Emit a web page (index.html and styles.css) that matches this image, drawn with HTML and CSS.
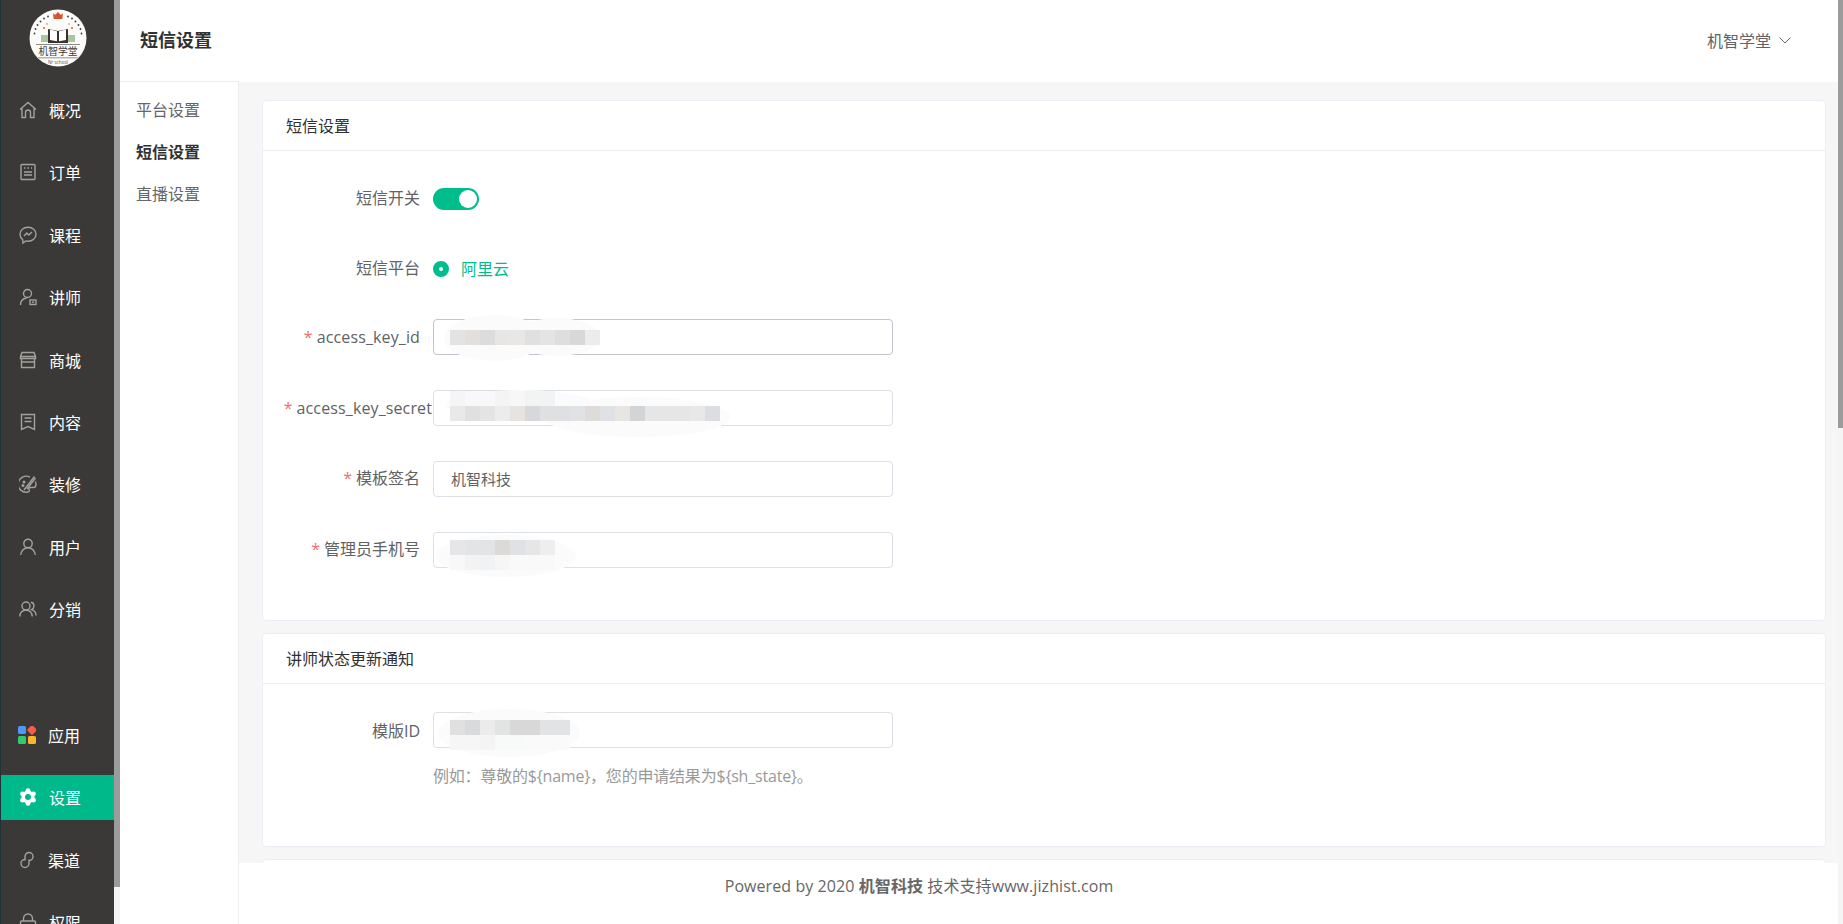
FILE: index.html
```html
<!DOCTYPE html>
<html lang="zh-CN">
<head>
<meta charset="utf-8">
<title>短信设置</title>
<link rel="stylesheet" href="styles.css">
</head>
<body>
<div class="app">
  <aside class="sidebar">
    <div class="side-inner">
      <div class="logo">
        <svg width="58" height="58" viewBox="0 0 58 58">
          <circle cx="29" cy="29" r="28.500" fill="#fbfbf9"/>
          <path d="M24 4l2 2 3-3 3 3 2-2 -.7 6h-8.600z" fill="#d8542f"/>
          <g fill="#3d3a36">
            <circle cx="19" cy="7.500" r=".9"/><circle cx="15" cy="9.500" r=".9"/><circle cx="11.500" cy="12.500" r=".9"/><circle cx="8.500" cy="16" r=".9"/><circle cx="6.500" cy="20" r=".9"/><circle cx="5.500" cy="24.500" r=".9"/>
            <circle cx="39" cy="7.500" r=".9"/><circle cx="43" cy="9.500" r=".9"/><circle cx="46.500" cy="12.500" r=".9"/><circle cx="49.500" cy="16" r=".9"/><circle cx="51.500" cy="20" r=".9"/><circle cx="52.500" cy="24.500" r=".9"/>
          </g>
          <g fill="#e0694a"><circle cx="15" cy="19" r="1.100"/><circle cx="43" cy="19" r="1.100"/><circle cx="18" cy="15" r=".8"/><circle cx="40" cy="15" r=".8"/></g>
          <rect x="12" y="26" width="7" height="7" fill="#a9c6a3"/><rect x="39" y="26" width="7" height="7" fill="#a9c6a3"/>
          <path d="M19 20l10 2 10-2v14H19z" fill="#38332e"/>
          <path d="M21 20.500l7 1.800v10l-7-1.300zM37 20.500l-7 1.800v10l7-1.300z" fill="#fff"/>
          <rect x="7" y="35" width="44" height="1" fill="#8a8a86"/>
          <text x="29" y="46" class="logo-name" text-anchor="middle">机智学堂</text>
          <rect x="9" y="48" width="40" height="1.500" fill="#b5b5b0"/>
          <text x="29" y="54.500" class="logo-sub" text-anchor="middle">Nr school</text>
        </svg>
      </div>
      <nav class="nav">
        <a class="nav-item"><svg class="ico" viewBox="0 0 18 18"><path d="M1 8.500 9 1.500l8 7M3 7v9.500h3.500V11.500a2.500 2.500 0 0 1 5 0v5H15V7"/></svg><span>概况</span></a>
        <a class="nav-item"><svg class="ico" viewBox="0 0 18 18"><rect x="2" y="1.500" width="14" height="15" rx="1"/><path d="M5 5h1.500M8.500 5H10M12 5h1M5 9h8M5 12h8"/></svg><span>订单</span></a>
        <a class="nav-item"><svg class="ico" viewBox="0 0 18 18"><path d="M9 1.200c4.500 0 8 3 8 7s-3.500 7-8 7c-.8 0-1.500-.1-2.200-.3L4 17l-.3-3.500C2 12.200 1 10.300 1 8.200c0-4 3.500-7 8-7z"/><path d="M5 10l2.800-3 2 2L13 6"/></svg><span>课程</span></a>
        <a class="nav-item"><svg class="ico" viewBox="0 0 18 18"><circle cx="8.500" cy="5.500" r="4"/><path d="M1.500 17c0-4 2.500-6.500 6-7"/><rect x="11" y="12" width="6" height="4.500"/><path d="M13 14.200h2"/></svg><span>讲师</span></a>
        <a class="nav-item"><svg class="ico" viewBox="0 0 18 18"><path d="M3 1.500h12l1.500 4v2h-15v-2zM1.500 5.500h15M2.500 7.500v9h13v-9M2 11h14"/></svg><span>商城</span></a>
        <a class="nav-item"><svg class="ico" viewBox="0 0 18 18"><path d="M2.500 1.500h13v15l-6.500-3-6.500 3zM5.500 5h7M5.500 8.500h7"/></svg><span>内容</span></a>
        <a class="nav-item"><svg class="ico" viewBox="0 0 18 18"><path d="M11 2.200A8 8 0 1 0 9 17c1.500 0 1.500-1.500 1-2.500s0-2 1.500-2h3c1.500 0 2.500-1 2.500-3 0-1-.2-2-.6-3"/><path d="M5 15 15.500 1.500M8 14 16.500 3"/><circle cx="5" cy="7" r=".8"/><circle cx="4" cy="10.500" r=".8"/></svg><span>装修</span></a>
        <a class="nav-item"><svg class="ico" viewBox="0 0 18 18"><circle cx="9" cy="5.500" r="4.200"/><path d="M1.800 17c0-4 3-7.200 7.200-7.200s7.200 3.200 7.200 7.200"/></svg><span>用户</span></a>
        <a class="nav-item"><svg class="ico" viewBox="0 0 18 18"><circle cx="7" cy="6" r="4"/><path d="M.8 16.500c0-3.800 2.700-6.500 6.200-6.500s6.200 2.700 6.200 6.500M12 2.300c2 .3 3 2 3 3.700s-1 3-2.500 3.700c2.500.7 4.500 3 4.500 5.800"/></svg><span>分销</span></a>
      </nav>
      <nav class="nav nav-lower">
        <a class="nav-item nav-item-tight"><svg class="ico-apps" viewBox="0 0 18 18"><rect x="0" y="0" width="8" height="8" rx="1.500" fill="#4f97f3"/><rect x="10.300" y=".3" width="7.400" height="7.400" rx="1.500" fill="#f75c4c" transform="rotate(45 14 4)"/><rect x="0" y="10" width="8" height="8" rx="1.500" fill="#35c96e"/><rect x="10" y="10" width="8" height="8" rx="1.500" fill="#f9b62a"/></svg><span>应用</span></a>
        <a class="nav-item nav-item-active"><svg class="ico-fill" viewBox="0 0 18 18"><circle cx="9" cy="9" r="6.500"/><circle cx="9" cy="2.600" r="2.400"/><circle cx="9" cy="15.400" r="2.400"/><circle cx="3.500" cy="5.800" r="2.400"/><circle cx="14.500" cy="5.800" r="2.400"/><circle cx="3.500" cy="12.200" r="2.400"/><circle cx="14.500" cy="12.200" r="2.400"/><circle class="gear-hole" cx="9" cy="9" r="3"/></svg><span>设置</span></a>
        <a class="nav-item nav-item-tight"><svg class="ico" viewBox="0 0 18 18"><path d="M7 9.500V5.500a4 4 0 0 1 8 0c0 2.500-2 4-4 4M11 8.500v4a4 4 0 0 1-8 0c0-2.500 2-4 4-4"/></svg><span>渠道</span></a>
        <a class="nav-item"><svg class="ico" viewBox="0 0 18 18"><rect x="1.500" y="8" width="15" height="9" rx="1"/><path d="M4.500 8V5.500a4.500 4.500 0 0 1 9 0V8M9 11v3"/></svg><span>权限</span></a>
      </nav>
    </div>
    <div class="side-scroll"><div class="side-thumb"></div></div>
  </aside>

  <div class="main">
    <header class="topbar">
      <h1 class="page-title">短信设置</h1>
      <div class="account">
        <span>机智学堂</span>
        <svg class="chev" viewBox="0 0 12 7"><path d="M.5.500 6 6l5.500-5.500"/></svg>
      </div>
    </header>
    <div class="body">
      <div class="submenu">
        <a class="sub-item">平台设置</a>
        <a class="sub-item sub-active">短信设置</a>
        <a class="sub-item">直播设置</a>
      </div>
      <div class="pane">
        <div class="content">
          <section class="card">
            <div class="card-head">短信设置</div>
            <div class="card-body card-body-a">
              <div class="row row-switch">
                <label class="lbl lbl-cjk">短信开关</label>
                <span class="switch"><i class="knob"></i></span>
              </div>
              <div class="row row-radio">
                <label class="lbl lbl-cjk">短信平台</label>
                <span class="radio"></span><span class="radio-text">阿里云</span>
              </div>
              <div class="row">
                <label class="lbl lbl-latin"><em class="req">*</em>access_key_id</label>
                <div class="input input-hover">
                  <span class="blob blob-1a"></span><span class="blob blob-1b"></span>
                  <span class="mosaic m1"></span>
                </div>
              </div>
              <div class="row">
                <label class="lbl lbl-latin lbl-long"><em class="req">*</em>access_key_secret</label>
                <div class="input">
                  <span class="blob blob-2a"></span><span class="blob blob-2b"></span>
                  <span class="mosaic m2top"></span><span class="mosaic m2"></span>
                </div>
              </div>
              <div class="row">
                <label class="lbl lbl-cjk"><em class="req">*</em>模板签名</label>
                <div class="input"><span class="input-val">机智科技</span></div>
              </div>
              <div class="row">
                <label class="lbl lbl-cjk"><em class="req">*</em>管理员手机号</label>
                <div class="input">
                  <span class="blob blob-3"></span>
                  <span class="mosaic m3"></span><span class="mosaic m3low"></span>
                </div>
              </div>
            </div>
          </section>
          <section class="card">
            <div class="card-head">讲师状态更新通知</div>
            <div class="card-body card-body-b">
              <div class="row row-tight">
                <label class="lbl">模版ID</label>
                <div class="input">
                  <span class="blob blob-4"></span>
                  <span class="mosaic m4"></span><span class="mosaic m4low"></span>
                </div>
              </div>
              <p class="hint">例如：尊敬的${name}，您的申请结果为${sh_state}。</p>
            </div>
          </section>
          <section class="card">
            <div class="card-head"></div>
          </section>
        </div>
        <footer class="footer">Powered by 2020 <b>机智科技</b> 技术支持www.jizhist.com</footer>
      </div>
    </div>
  </div>
  <div class="page-scroll"><div class="page-thumb"></div></div>
</div>
</body>
</html>
```

FILE: styles.css
```css
* { box-sizing: border-box; }
html, body { margin: 0; height: 100%; overflow: hidden; }
body { font-family: "Open Sans", "Noto Sans CJK SC", sans-serif; font-size: 16px; color: #606266; background: #fff; }
a { text-decoration: none; color: inherit; }

.app { display: flex; height: 924px; width: 1843px; overflow: hidden; }

/* sidebar */
.sidebar { display: flex; width: 120px; flex: none; }
.side-inner { width: 114px; background: #3a3937; border-left: 1px solid #1d3338; overflow: hidden; }
.side-scroll { width: 6px; background: #f5f5f5; }
.side-thumb { height: 887px; background: #9c9c9c; }
.logo { height: 87.500px; padding: 8.500px 0 0 27.500px; }
.logo svg { display: block; }
.logo-name { font-size: 9.800px; fill: #3c3a37; font-family: "Noto Sans CJK SC", sans-serif; }
.logo-sub { font-size: 4.500px; fill: #555; }
.nav { display: flex; flex-direction: column; gap: 17.400px; }
.nav-lower { margin-top: 80.800px; }
.nav-item { height: 45px; flex: none; display: flex; align-items: center; padding-left: 18px; gap: 12px; color: #fff; font-family: "Noto Sans CJK SC", sans-serif; }
.nav-item-tight { padding-left: 17px; }
.nav-item-active { background: #00b98b; }
.ico { width: 18px; height: 18px; flex: none; fill: none; stroke: #a3a29f; stroke-width: 1.400; }
.ico-apps { width: 18px; height: 18px; flex: none; }
.ico-fill { width: 18px; height: 18px; flex: none; fill: #fff; }
.gear-hole { fill: #00b98b; }

/* main column */
.main { flex: 1; min-width: 0; display: flex; flex-direction: column; }
.topbar { height: 82px; flex: none; display: flex; align-items: center; justify-content: space-between; padding: 0 47px 3px 20px; background: #fff; }
.page-title { margin: 0 0 2px; font-size: 18px; font-weight: 700; color: #303133; font-family: "Noto Sans CJK SC", sans-serif; }
.account { display: flex; align-items: center; gap: 8px; color: #606266; font-family: "Noto Sans CJK SC", sans-serif; }
.chev { width: 12px; height: 7px; fill: none; stroke: #606266; stroke-width: 1; margin-top: 1px; }
.body { flex: 1; min-height: 0; display: flex; }

/* secondary menu */
.submenu { width: 119px; flex: none; background: #fff; border-top: 1px solid #eee; border-right: 1px solid #eee; margin-top: -1px; padding: 15px 0 0 16px; display: flex; flex-direction: column; gap: 18px; font-family: "Noto Sans CJK SC", sans-serif; }
.sub-item { height: 24px; line-height: 24px; color: #666; }
.sub-active { font-weight: 700; color: #303133; }

/* content */
.pane { flex: 1; min-width: 0; display: flex; flex-direction: column; }
.content { height: 781px; flex: none; overflow: hidden; background: #f6f6f6; padding: 18px 12px 0 23px; display: flex; flex-direction: column; gap: 12px; }
.card { flex: none; background: #fff; border: 1px solid #ebeef5; border-radius: 4px; }
.card-head { height: 50px; line-height: 49px; padding-left: 23px; border-bottom: 1px solid #ebeef5; color: #303133; font-family: "Noto Sans CJK SC", sans-serif; }
.card-body-a { padding: 30px 0 52px; }
.card-body-b { padding: 28px 0 58px; }
.row { display: flex; align-items: center; height: 36px; margin-bottom: 35px; }
.row:last-child { margin-bottom: 0; }
.row-switch { margin-bottom: 34px; }
.row-radio { margin-bottom: 32px; }
.row-tight { margin-bottom: 0; }
.lbl { width: 170px; flex: none; text-align: right; padding-right: 13px; white-space: nowrap; color: #606266; }
.lbl-cjk { padding-bottom: 4px; }
.lbl-latin { letter-spacing: .12px; }
.lbl-long { padding-right: 1px; }
.req { font-style: normal; color: #f56c6c; margin-right: 4px; }

.switch { width: 46px; height: 22px; border-radius: 11px; background: #00bd8c; position: relative; display: block; }
.knob { position: absolute; right: 2px; top: 2px; width: 18px; height: 18px; border-radius: 50%; background: #fff; }
.radio { width: 16px; height: 16px; border-radius: 50%; background: #fff; border: 6px solid #00bd8c; flex: none; }
.radio-text { margin: 0 0 2px 12px; color: #00bd8c; font-family: "Noto Sans CJK SC", sans-serif; }

.input { width: 460px; height: 36px; flex: none; position: relative; border: 1px solid #dcdfe6; border-radius: 4px; background: #fff; display: flex; align-items: center; padding-left: 17px; }
.input-hover { border-color: #c0c4cc; }
.input-val { color: #606266; font-size: 15px; font-family: "Noto Sans CJK SC", sans-serif; padding-bottom: 2px; }

/* redacted values painted over the fields */
.blob { position: absolute; background: #fafbfa; border-radius: 50%; }
.blob-1a { left: 10px; top: -5px; width: 100px; height: 46px; }
.blob-1b { left: 80px; top: -2px; width: 86px; height: 38px; }
.blob-2a { left: 12px; top: -1px; width: 150px; height: 30px; }
.blob-2b { left: 110px; top: 6px; width: 186px; height: 40px; }
.blob-3 { left: 2px; top: 2px; width: 140px; height: 42px; }
.blob-4 { left: 4px; top: -4px; width: 142px; height: 48px; }
.mosaic { position: absolute; left: 16px; height: 15px; }
.m1 { top: 10px; width: 150px; background: linear-gradient(90deg, #e3e3e4 0 15px, #e2dfdd 15px 30px, #dcdcdd 30px 45px, #e8e6e4 45px 60px, #e8e7e6 60px 75px, #e0e0e0 75px 90px, #e4e4e4 90px 105px, #dedede 105px 120px, #d8d8d8 120px 135px, #ececec 135px 150px); }
.m2top { top: 0; width: 105px; background: linear-gradient(90deg, #f5f5f5 0 15px, #f8f8f8 15px 45px, #f4f4f4 45px 60px, #f7f7f7 60px 75px, #f2f3f3 75px 105px); }
.m2 { top: 15px; width: 270px; background: linear-gradient(90deg, #e9e9e9 0 15px, #e0e0e0 15px 30px, #e4e4e4 30px 45px, #ececec 45px 60px, #e6e3e1 60px 75px, #d7d8db 75px 90px, #dfe0e2 90px 120px, #e0e2e6 120px 135px, #dedcda 135px 150px, #e0e1e4 150px 165px, #e8e6e3 165px 180px, #d3d4d6 180px 195px, #e4e6e7 195px 210px, #e6e6e6 210px 240px, #e8e8e8 240px 255px, #dcdde2 255px 270px); }
.m3 { top: 7px; width: 105px; background: linear-gradient(90deg, #e6e6e8 0 15px, #e3e4e6 15px 45px, #dcdad8 45px 60px, #e0e1e4 60px 75px, #e6e6e6 75px 90px, #eeeeee 90px 105px); }
.m3low { top: 22px; width: 105px; background: linear-gradient(90deg, #f8f8f8 0 15px, #f3f3f3 15px 30px, #f1f2f3 30px 45px, #f6f6f6 45px 60px, #f8f9f8 60px 105px); }
.m4 { top: 7px; width: 120px; background: linear-gradient(90deg, #e0e0e0 0 15px, #d9dadb 15px 30px, #ecebeb 30px 45px, #e2e4e4 45px 60px, #d8d8d9 60px 90px, #e2e3e4 90px 120px); }
.m4low { top: 22px; width: 120px; background: linear-gradient(90deg, #f6f6f6 0 30px, #f4f4f4 30px 45px, #f8f9f9 45px 75px, #fafafa 75px 120px); }

.hint { margin: 16px 0 0 170px; line-height: 24px; color: #999; letter-spacing: -.2px; }

.footer { flex: 1; min-height: 0; background: #fff; text-align: center; padding: 8px 239px 0 0; line-height: 30px; color: #666; letter-spacing: .08px; }
.footer b { font-weight: 700; }

.page-scroll { width: 5px; flex: none; background: #f5f5f5; }
.page-thumb { height: 428px; background: #9c9c9c; }
```
